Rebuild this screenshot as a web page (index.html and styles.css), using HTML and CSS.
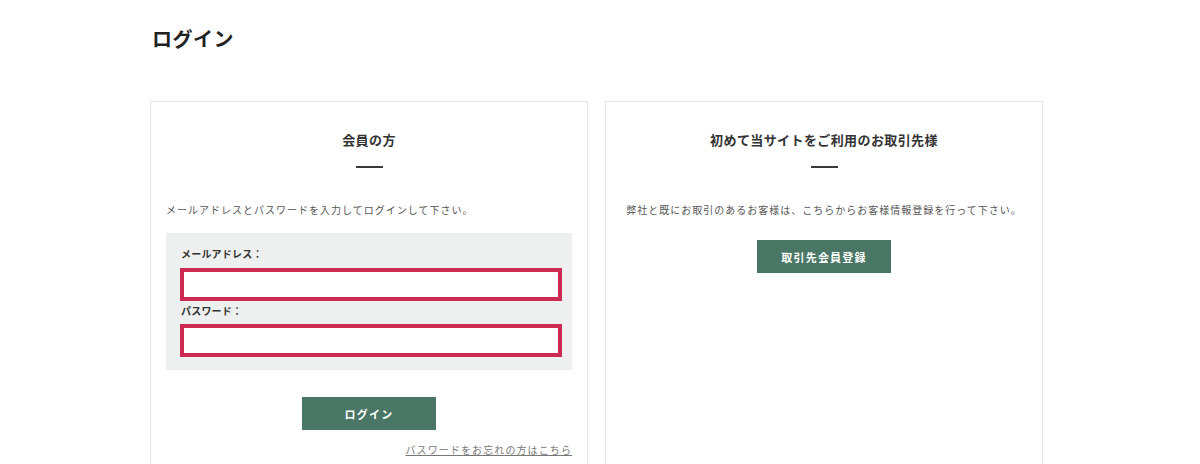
FILE: index.html
```html
<!DOCTYPE html>
<html lang="ja">
<head>
<meta charset="utf-8">
<title>ログイン</title>
<link rel="stylesheet" href="styles.css">
</head>
<body>
<div class="page">
  <h1 class="page-title">ログイン</h1>
  <div class="cards">
    <section class="card">
      <h2 class="card-title">会員の方</h2>
      <div class="rule"></div>
      <p class="desc">メールアドレスとパスワードを入力してログインして下さい。</p>
      <form class="login-box">
        <label class="field-label" for="email">メールアドレス：</label>
        <input class="field-input" id="email" type="text">
        <label class="field-label second" for="pw">パスワード：</label>
        <input class="field-input" id="pw" type="password">
      </form>
      <div class="btn-row">
        <a class="btn" href="#">ログイン</a>
      </div>
      <div class="forgot-row">
        <a class="forgot" href="#">パスワードをお忘れの方はこちら</a>
      </div>
    </section>
    <section class="card">
      <h2 class="card-title">初めて当サイトをご利用のお取引先様</h2>
      <div class="rule"></div>
      <p class="desc center">弊社と既にお取引のあるお客様は、こちらからお客様情報登録を行って下さい。</p>
      <div class="btn-row tight">
        <a class="btn" href="#">取引先会員登録</a>
      </div>
    </section>
  </div>
</div>
</body>
</html>
```

FILE: styles.css
```css
* { box-sizing: border-box; }
html, body { margin: 0; padding: 0; background: #fff; }
body {
  font-family: "Noto Sans CJK JP", "Noto Sans", sans-serif;
  color: #333;
}
.page {
  width: 893px;
  margin-left: 150px;
  padding-top: 25px;
}
.page-title {
  margin: 0 0 0 2px;
  font-size: 20px;
  line-height: 28px;
  font-weight: 700;
  color: #222;
  letter-spacing: 0.5px;
}
.cards {
  margin-top: 48px;
  display: grid;
  grid-template-columns: 438px 438px;
  column-gap: 17px;
}
.card {
  border: 1px solid #e6e6e6;
  min-height: 420px;
  padding: 28px 15px 0;
}
.card-title {
  margin: 0;
  text-align: center;
  font-size: 13px;
  line-height: 20px;
  font-weight: 700;
  letter-spacing: 0.4px;
  color: #333;
}
.rule {
  width: 27px;
  height: 2px;
  background: #3a3a3a;
  margin: 16px auto 0;
}
.desc {
  margin: 34px 0 0;
  font-size: 10px;
  line-height: 16px;
  letter-spacing: 1px;
  color: #555;
}
.desc.center { text-align: center; }
.login-box {
  margin: 15px 0 0;
  background: #eeefef;
  padding: 14px 10px 13px 14px;
  display: flex;
  flex-direction: column;
}
.field-label {
  font-size: 10px;
  line-height: 14px;
  font-weight: 700;
  color: #333;
  letter-spacing: 0.2px;
  margin-left: 1px;
}
.field-label.second { margin-top: 3px; }
.field-input {
  margin-top: 7px;
  height: 33px;
  width: 100%;
  border: 4px solid #cc2a52;
  background: #fff;
  outline: none;
  padding: 0 6px;
}
.field-label.second + .field-input { margin-top: 6px; }
.btn-row {
  margin-top: 27px;
  display: flex;
  justify-content: center;
}
.btn-row.tight { margin-top: 22px; }
.btn {
  width: 134px;
  height: 33px;
  background: #4a7765;
  color: #fff;
  text-decoration: none;
  font-size: 11px;
  font-weight: 700;
  letter-spacing: 1.2px;
  display: flex;
  align-items: center;
  justify-content: center;
}
.forgot-row {
  margin-top: 12px;
  display: flex;
  justify-content: flex-end;
}
.forgot {
  font-size: 10px;
  line-height: 16px;
  letter-spacing: 1.1px;
  color: #777;
  text-decoration: underline;
}
```
